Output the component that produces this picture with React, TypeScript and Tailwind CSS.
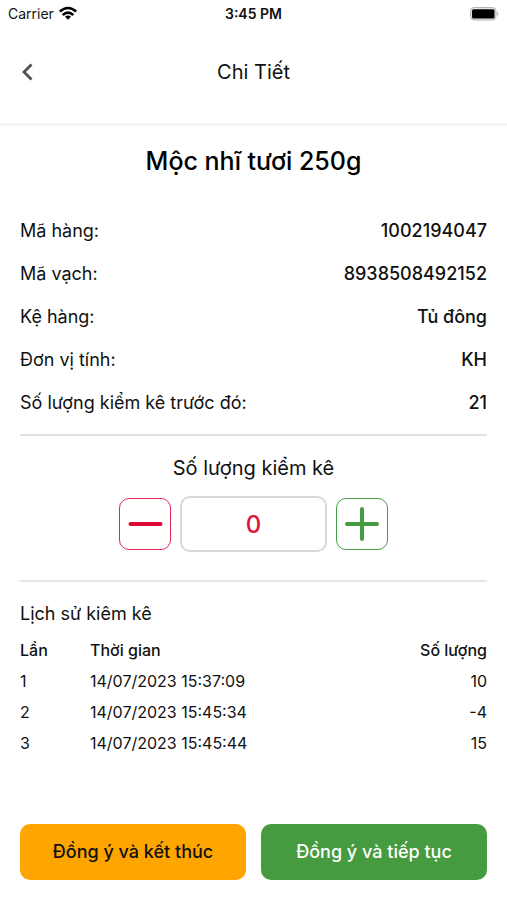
import { useState } from "react";

const details = [
  { label: "Mã hàng:", value: "1002194047" },
  { label: "Mã vạch:", value: "8938508492152" },
  { label: "Kệ hàng:", value: "Tủ đông" },
  { label: "Đơn vị tính:", value: "KH" },
  { label: "Số lượng kiểm kê trước đó:", value: "21" },
];

const history = [
  { time: "14/07/2023 15:37:09", quantity: 10 },
  { time: "14/07/2023 15:45:34", quantity: -4 },
  { time: "14/07/2023 15:45:44", quantity: 15 },
];

function StatusBar() {
  return (
    <div className="grid h-7 grid-cols-3 items-center px-2 text-sm">
      <div className="flex items-center gap-1">
        <span>Carrier</span>
        <svg className="h-4 w-5" viewBox="0 0 20 16" aria-hidden="true">
          <g fill="none" stroke="black" strokeWidth="2.6">
            <path d="M1.8 5.6Q10 -1.6 18.2 5.6" />
            <path d="M4.7 9Q10 4.4 15.3 9" />
          </g>
          <path d="M7 10.7Q10 8.2 13 10.7L10 13.8Z" />
        </svg>
      </div>
      <span className="text-center font-semibold">3:45 PM</span>
      <svg className="h-4 w-8 justify-self-end" viewBox="0 0 32 16" aria-hidden="true">
        <rect x="3.5" y="1.5" width="25.5" height="12.5" rx="3.5" fill="#e8e8e8" stroke="#b4b4b4" />
        <rect x="5" y="3.2" width="22.5" height="9.3" rx="1.5" />
        <path d="M30 5.8Q32.4 7.7 30 9.7Z" fill="#aaa" />
      </svg>
    </div>
  );
}

export default function App() {
  const [count, setCount] = useState("0");
  const change = (step: number) => setCount(String((Number(count) || 0) + step));

  return (
    <div className="flex min-h-screen flex-col bg-white font-['Inter','Liberation_Sans',sans-serif] text-[#111]">
      <StatusBar />
      <header className="grid h-[97px] grid-cols-[40px_1fr_40px] items-center border-b-2 border-[#f2f2f2] px-2 pb-2 shadow-xs">
        <button type="button" aria-label="Quay lại" className="flex size-10 items-center justify-center">
          <svg className="size-5" viewBox="0 0 20 20" fill="none" stroke="#505050" strokeWidth="2.8" aria-hidden="true">
            <path d="M13.5 2.5L6 10L13.5 17.5" />
          </svg>
        </button>
        <h1 className="text-center text-xl">Chi Tiết</h1>
      </header>

      <main className="flex flex-1 flex-col px-5 pt-5">
        <h2 className="text-center text-[25px] leading-8 font-medium text-black">Mộc nhĩ tươi 250g</h2>
        <dl className="mt-8 border-b-2 border-[#e2e2e2] pb-2.5">
          {details.map((item) => (
            <div key={item.label} className="flex h-[43px] items-center justify-between text-lg">
              <dt>{item.label}</dt>
              <dd className="font-medium">{item.value}</dd>
            </div>
          ))}
        </dl>

        <section className="flex flex-col items-center border-b-2 border-[#e6e6e6] pt-4 pb-7">
          <label htmlFor="count" className="text-xl leading-8">Số lượng kiểm kê</label>
          <div className="mt-3 flex items-center gap-[9px]">
            <button type="button" aria-label="Giảm" onClick={() => change(-1)} className="flex size-[52px] items-center justify-center rounded-[10px] border border-[#e02850]">
              <svg className="size-9" viewBox="0 0 36 36" stroke="#dc0a32" strokeWidth="4" strokeLinecap="round" aria-hidden="true"><path d="M3.5 18H33.5" /></svg>
            </button>
            <input id="count" inputMode="numeric" value={count} onChange={(e) => setCount(e.target.value)} className="h-14 w-[147px] rounded-[10px] border-2 border-[#d9d9d9] text-center text-2xl font-medium text-[#dc1438]" />
            <button type="button" aria-label="Tăng" onClick={() => change(1)} className="flex size-[52px] items-center justify-center rounded-[10px] border border-[#469b46]">
              <svg className="size-9" viewBox="0 0 36 36" stroke="#469b41" strokeWidth="4" strokeLinecap="round" aria-hidden="true"><path d="M3 18H33M18 3V33" /></svg>
            </button>
          </div>
        </section>

        <section className="pt-4">
          <h3 className="text-lg leading-8">Lịch sử kiêm kê</h3>
          <table className="mt-1 w-full table-fixed text-base">
            <thead>
              <tr className="h-[31px] text-left">
                <th className="w-[70px] font-medium">Lần</th>
                <th className="font-medium">Thời gian</th>
                <th className="w-25 text-right font-medium">Số lượng</th>
              </tr>
            </thead>
            <tbody>
              {history.map((entry, index) => (
                <tr key={entry.time} className="h-[31px]">
                  <td>{index + 1}</td>
                  <td>{entry.time}</td>
                  <td className="text-right">{entry.quantity}</td>
                </tr>
              ))}
            </tbody>
          </table>
        </section>

        <div className="mt-auto grid grid-cols-2 gap-[15px] pt-8 pb-5 text-lg">
          <button type="button" className="h-14 rounded-[10px] bg-[#ffa500] font-medium">Đồng ý và kết thúc</button>
          <button type="button" className="h-14 rounded-[10px] bg-[#469b41] font-medium text-white">Đồng ý và tiếp tục</button>
        </div>
      </main>
    </div>
  );
}
